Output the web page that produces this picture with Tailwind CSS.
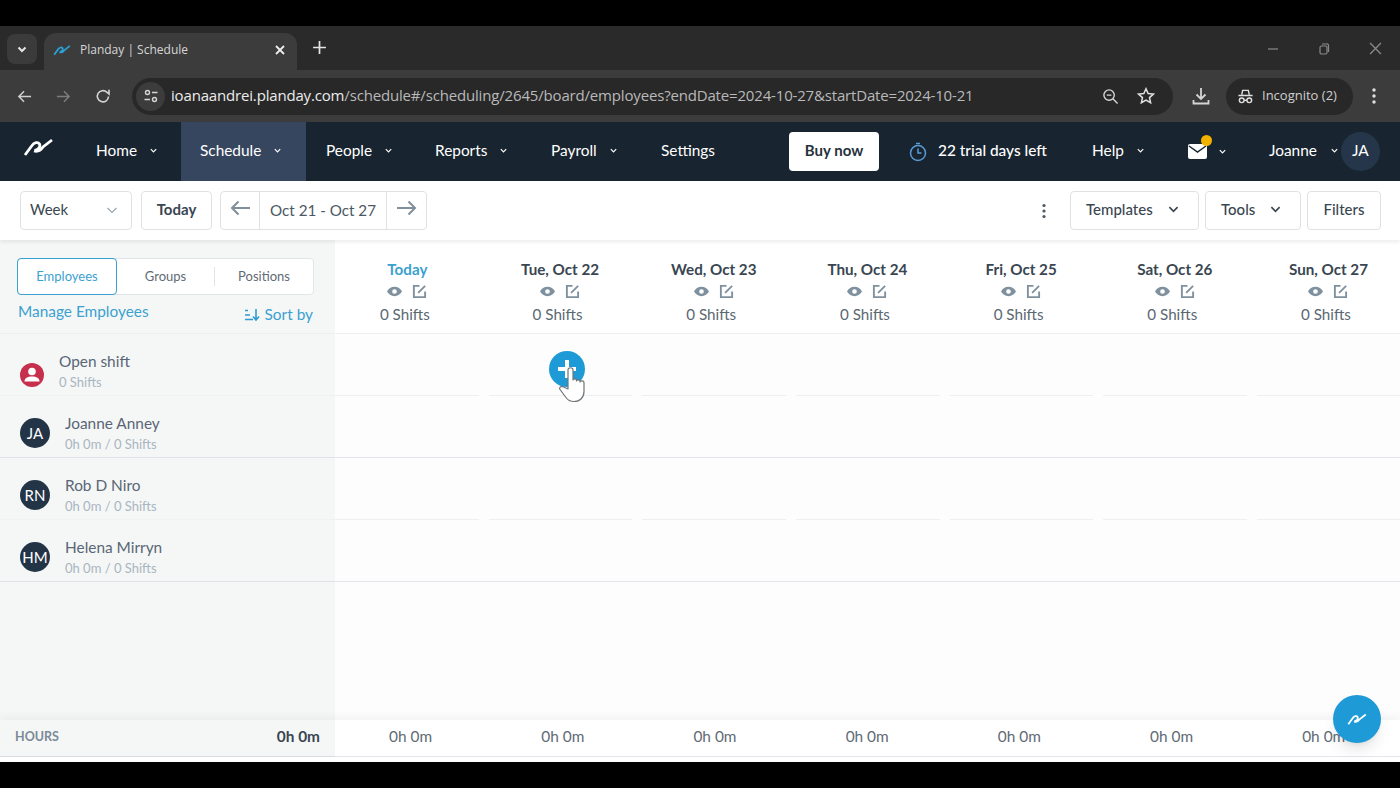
<!DOCTYPE html>
<html>
<head>
<meta name="viewport" content="width=device-width, initial-scale=1">
<title>Planday | Schedule</title>
<script src="https://cdn.jsdelivr.net/npm/@tailwindcss/browser@4"></script>
</head>
<body class="bg-black">
<div class="relative h-[788px] w-[1400px] overflow-hidden bg-black font-['Lato',sans-serif]">
  <div class="h-[26px]"></div>

  <!-- tab strip -->
  <div class="flex h-[44px] items-end bg-[#2a2a2a] font-['Open_Sans',sans-serif] text-[#d6d6d6]">
    <div class="mb-[6px] ml-[7px] flex h-[30px] w-[30px] items-center justify-center rounded-lg bg-[#3b3b3b]">
      <svg class="h-3 w-3" viewBox="0 0 12 12" fill="none" stroke="#e5e5e5" stroke-width="2"><path d="M2.5 4.5 6 8l3.5-3.5"/></svg>
    </div>
    <div class="ml-[7px] flex h-[37px] w-[253px] items-center rounded-t-xl bg-[#3c3c3c] pb-[4px] pl-[9px] pr-[11px]">
      <svg class="h-[16px] w-[18px]" viewBox="0 0 31 20" fill="none" stroke="#2aa0d6" stroke-width="3"><path d="M2 18 9 8.500c2-3 6-4 7.500-1.500 1.500 3-2 6-5 6.500M11 14c4 1 7-1 9-4L29 3"/></svg>
      <span class="ml-[9px] flex-1 text-[12px]">Planday | Schedule</span>
      <svg class="h-[12px] w-[12px]" viewBox="0 0 12 12" stroke="#eeeeee" stroke-width="1.800"><path d="m2 2 8 8M10 2l-8 8"/></svg>
    </div>
    <svg class="mb-[15px] ml-[15px] h-[15px] w-[15px]" viewBox="0 0 14 14" stroke="#e5e5e5" stroke-width="1.600"><path d="M7 1v12M1 7h12"/></svg>
    <div class="flex-1"></div>
    <div class="mb-[15px] flex items-center gap-[39px] pr-[18px]">
      <svg class="h-[12px] w-[12px]" viewBox="0 0 12 12" stroke="#8a8a8a" stroke-width="1.200"><path d="M1 6h10"/></svg>
      <svg class="h-[12px] w-[12px]" viewBox="0 0 12 12" fill="none" stroke="#8a8a8a" stroke-width="1.200"><rect x="2" y="3" width="7" height="8" rx="1.500"/><path d="M4 1h4.500A1.500 1.500 0 0 1 10.500 2.500V9"/></svg>
      <svg class="h-[13px] w-[13px]" viewBox="0 0 12 12" stroke="#8a8a8a" stroke-width="1.200"><path d="m1 1 10 10M11 1 1 11"/></svg>
    </div>
  </div>

  <!-- browser toolbar -->
  <div class="flex h-[52px] items-center bg-[#3c3c3c] font-['Open_Sans',sans-serif] text-[#d9d9d9]">
    <div class="flex w-[132px] items-center pl-[17px]">
      <svg class="h-[15px] w-[15px]" viewBox="0 0 16 16" fill="none" stroke="#cfcfcf" stroke-width="1.600"><path d="M15 8H2M7.500 2.500 2 8l5.500 5.500"/></svg>
      <svg class="ml-[24px] h-[15px] w-[15px]" viewBox="0 0 16 16" fill="none" stroke="#7d7d7d" stroke-width="1.600"><path d="M1 8h13M8.500 2.500 14 8l-5.500 5.500"/></svg>
      <svg class="ml-[24px] h-[16px] w-[16px]" viewBox="0 0 16 16" fill="none" stroke="#d5d5d5" stroke-width="1.600"><path d="M13.500 8.500a5.600 5.600 0 1 1-1.700-4.300L14 6V1.800"/></svg>
    </div>
    <div class="flex h-[37px] w-[1041px] items-center rounded-full bg-[#282828]">
      <div class="ml-[4px] flex h-[29px] w-[29px] items-center justify-center rounded-full bg-[#3c3c3c]">
        <svg class="h-[16px] w-[16px]" viewBox="0 0 16 16" fill="none" stroke="#d5d5d5" stroke-width="1.400"><circle cx="4.500" cy="4.500" r="2"/><path d="M9 4.500h5.500M1.500 11.500H7"/><circle cx="11.500" cy="11.500" r="2"/></svg>
      </div>
      <span class="ml-[6px] flex-1 pb-[2px] text-[15px] tracking-[-0.17px] whitespace-nowrap"><span class="text-[#ececec]">ioanaandrei.planday.com</span><span class="text-[#b9b9b9]">/schedule#/scheduling/2645/board/employees?endDate=2024-10-27&amp;startDate=2024-10-21</span></span>
      <svg class="h-[17px] w-[17px]" viewBox="0 0 18 18" fill="none" stroke="#d5d5d5" stroke-width="1.500"><circle cx="7.500" cy="7.500" r="5.500"/><path d="m11.500 11.500 5 5M5 7.500h5"/></svg>
      <svg class="ml-[18px] mr-[18px] h-[18px] w-[18px]" viewBox="0 0 20 20" fill="none" stroke="#e0e0e0" stroke-width="1.700"><path d="m10 2 2.400 5.300 5.800.6-4.300 3.900 1.200 5.700-5.100-2.900-5.100 2.900 1.200-5.700L1.800 7.900l5.800-.6z"/></svg>
    </div>
    <svg class="ml-[18px] h-[20px] w-[20px]" viewBox="0 0 20 20" fill="none" stroke="#d5d5d5" stroke-width="1.800"><path d="M10 2v11M5.500 8.500 10 13l4.500-4.500M2.500 14v3.500h15V14"/></svg>
    <div class="ml-[15px] flex h-[37px] w-[127px] items-center rounded-full bg-[#282828] pl-[11px]">
      <svg class="h-[17px] w-[17px]" viewBox="0 0 18 18" fill="none" stroke="#e0e0e0" stroke-width="1.500"><path d="M5 7 6 2.500h6L13 7M1.500 8h15"/><circle cx="5" cy="13" r="2.500"/><circle cx="13" cy="13" r="2.500"/><path d="M7.500 13h3"/></svg>
      <span class="ml-[8px] text-[13px] text-[#cfcfcf]">Incognito (2)</span>
    </div>
    <svg class="ml-[18px] h-[18px] w-[6px]" viewBox="0 0 6 18" fill="#e0e0e0"><circle cx="3" cy="3" r="1.700"/><circle cx="3" cy="9" r="1.700"/><circle cx="3" cy="15" r="1.700"/></svg>
  </div>

  <!-- planday nav -->
  <nav class="flex h-[59px] items-center bg-[#18242f] text-[15.4px] text-white">
    <div class="flex w-[96px] justify-start pl-[23px]">
      <svg class="mb-[9px] h-[20px] w-[31px]" viewBox="0 0 31 20" fill="none" stroke="#ffffff" stroke-width="2.800"><path d="M2 18 9 8.500c2-3 6-4 7.500-1.500 1.500 3-2 6-5 6.500M11 14c4 1 7-1 9-4L29 3"/></svg>
    </div>
    <div class="flex w-[85px] items-center gap-[12px] pb-[2px]">Home <svg class="h-[9px] w-[9px]" viewBox="0 0 10 10" fill="none" stroke="#fff" stroke-width="1.300"><path d="m2 3.500 3 3 3-3"/></svg></div>
    <div class="flex h-full w-[125px] items-center gap-[12px] bg-[#36465f] pb-[2px] pl-[19px]">Schedule <svg class="h-[9px] w-[9px]" viewBox="0 0 10 10" fill="none" stroke="#fff" stroke-width="1.300"><path d="m2 3.500 3 3 3-3"/></svg></div>
    <div class="ml-[20px] flex w-[109px] items-center gap-[12px] pb-[2px]">People <svg class="h-[9px] w-[9px]" viewBox="0 0 10 10" fill="none" stroke="#fff" stroke-width="1.300"><path d="m2 3.500 3 3 3-3"/></svg></div>
    <div class="flex w-[116px] items-center gap-[12px] pb-[2px]">Reports <svg class="h-[9px] w-[9px]" viewBox="0 0 10 10" fill="none" stroke="#fff" stroke-width="1.300"><path d="m2 3.500 3 3 3-3"/></svg></div>
    <div class="flex w-[110px] items-center gap-[12px] pb-[2px]">Payroll <svg class="h-[9px] w-[9px]" viewBox="0 0 10 10" fill="none" stroke="#fff" stroke-width="1.300"><path d="m2 3.500 3 3 3-3"/></svg></div>
    <div class="w-[128px] pb-[2px]">Settings</div>
    <div class="flex h-[39px] w-[90px] items-center justify-center rounded bg-white pb-[2px] text-[15px] font-bold text-[#28323c]">Buy now</div>
    <svg class="ml-[30px] h-[20px] w-[18px]" viewBox="0 0 18 20" fill="none" stroke="#5b9bd5" stroke-width="1.500"><circle cx="9" cy="11" r="7.500"/><path d="M9 6.500V11h3.500M7 1.500h4"/></svg>
    <span class="ml-[11px] w-[154px] pb-[2px] font-medium">22 trial days left</span>
    <div class="flex w-[96px] items-center gap-[12px] pb-[2px]">Help <svg class="h-[9px] w-[9px]" viewBox="0 0 10 10" fill="none" stroke="#fff" stroke-width="1.300"><path d="m2 3.500 3 3 3-3"/></svg></div>
    <div class="relative flex w-[81px] items-center gap-[11px]">
      <svg class="h-[15px] w-[19px]" viewBox="0 0 19 15"><rect width="19" height="15" rx="2" fill="#fff"/><path d="m1 2 8.500 6L18 2" fill="none" stroke="#18242f" stroke-width="1.500"/></svg>
      <svg class="h-[9px] w-[9px]" viewBox="0 0 10 10" fill="none" stroke="#fff" stroke-width="1.300"><path d="m2 3.500 3 3 3-3"/></svg>
      <span class="absolute left-[13px] top-[-9px] h-[11px] w-[11px] rounded-full bg-[#f2b300]"></span>
    </div>
    <div class="flex items-center gap-[13px] pb-[2px]">Joanne <svg class="h-[9px] w-[9px]" viewBox="0 0 10 10" fill="none" stroke="#fff" stroke-width="1.300"><path d="m2 3.500 3 3 3-3"/></svg></div>
    <div class="ml-[2px] flex h-[39px] w-[39px] items-center justify-center rounded-full bg-[#26364a] pb-[2px]">JA</div>
  </nav>

  <!-- schedule toolbar -->
  <div class="relative flex h-[59px] items-center bg-white pl-[20px] pr-[19px] text-[15px] text-[#3a4651] shadow-[0_2px_4px_rgba(0,0,0,0.08)]">
    <div class="flex h-[39px] w-[112px] items-center justify-between rounded border border-[#dfe2e5] pb-[2px] pl-[9px] pr-[13px]">Week <svg class="h-[12px] w-[12px]" viewBox="0 0 12 12" fill="none" stroke="#9aa5af" stroke-width="1.200"><path d="m1.500 4 4.500 4.500L10.500 4"/></svg></div>
    <div class="ml-[9px] flex h-[39px] w-[71px] items-center justify-center rounded border border-[#dfe2e5] pb-[2px] font-bold">Today</div>
    <div class="ml-[8px] flex h-[39px] w-[207px] items-center rounded border border-[#dfe2e5]">
      <div class="flex h-full w-[39px] items-center justify-center border-r border-[#dfe2e5] pb-[5px]"><svg class="h-[16px] w-[20px]" viewBox="0 0 20 16" fill="none" stroke="#7f8f9c" stroke-width="2"><path d="M20 8H2M8.500 1.500 2 8l6.500 6.500"/></svg></div>
      <div class="flex h-full w-[127px] items-center justify-center border-r border-[#dfe2e5] text-[15.200px] text-[#4b5862]">Oct 21 - Oct 27</div>
      <div class="flex flex-1 items-center justify-center pb-[5px]"><svg class="h-[16px] w-[20px]" viewBox="0 0 20 16" fill="none" stroke="#7f8f9c" stroke-width="2"><path d="M0 8h18M11.500 1.500 18 8l-6.500 6.500"/></svg></div>
    </div>
    <div class="flex-1"></div>
    <svg class="h-[16px] w-[6px]" viewBox="0 0 6 16" fill="#4b5862"><circle cx="3" cy="2.500" r="1.600"/><circle cx="3" cy="8" r="1.600"/><circle cx="3" cy="13.500" r="1.600"/></svg>
    <div class="ml-[23px] flex h-[39px] w-[129px] items-center gap-[15px] rounded border border-[#dfe2e5] pb-[2px] pl-[15px] font-medium">Templates <svg class="h-[11px] w-[11px]" viewBox="0 0 12 12" fill="none" stroke="#3a4651" stroke-width="1.800"><path d="m1.500 3.500 4.500 4.500 4.500-4.500"/></svg></div>
    <div class="ml-[6px] flex h-[39px] w-[96px] items-center gap-[15px] rounded border border-[#dfe2e5] pb-[2px] pl-[15px] font-medium">Tools <svg class="h-[11px] w-[11px]" viewBox="0 0 12 12" fill="none" stroke="#3a4651" stroke-width="1.800"><path d="m1.500 3.500 4.500 4.500 4.500-4.500"/></svg></div>
    <div class="ml-[6px] flex h-[39px] w-[74px] items-center justify-center rounded border border-[#dfe2e5] pb-[2px] font-medium">Filters</div>
  </div>

  <!-- board -->
  <div class="flex h-[480px] bg-[#fdfdfd]">
    <aside class="w-[335px] bg-[#f5f7f7]">
      <div class="h-[94px] border-b border-[#eceeef] pl-[17px] pr-[22px] pt-[18px]">
        <div class="flex h-[37px] w-[297px] items-center rounded border border-[#e2e5e8] bg-white text-[13px] text-[#5f6b75]">
          <div class="-ml-px flex h-[37px] w-[100px] items-center justify-center rounded border border-[#3ba1cf] text-[#3ba1cf]">Employees</div>
          <div class="flex w-[98px] justify-center border-r border-[#e2e5e8]">Groups</div>
          <div class="flex flex-1 justify-center">Positions</div>
        </div>
        <div class="flex items-start justify-between text-[15.400px] text-[#3ba1cf]">
          <span class="pl-px pt-[5px]">Manage Employees</span>
          <span class="flex items-center gap-[5px] pt-[8px]">
            <svg class="h-[16px] w-[16px]" viewBox="0 0 16 16" fill="none" stroke="#2d9ccf" stroke-width="1.600"><path d="M1 3.500h3M1 8h5M1 12.500h8M12 2v11M9 9.500l3 3.500 3-3.500"/></svg>
            Sort by</span>
        </div>
      </div>
      <div class="relative flex h-[62px] items-start border-b border-[#eff1f2] pl-[20px]">
        <svg class="mt-[29px] h-[24px] w-[24px]" viewBox="0 0 24 24"><circle cx="12" cy="12" r="12" fill="#c7304c"/><circle cx="12" cy="8.500" r="3.800" fill="#fff"/><path d="M4.500 18.500c0-3.500 3-5 7.500-5s7.500 1.500 7.500 5z" fill="#fff"/></svg>
        <div class="ml-[15px] pt-[17px]">
          <div class="text-[15.400px] leading-[20px] text-[#5a6675]">Open shift</div>
          <div class="mt-[1px] text-[13px] leading-[20px] text-[#a9b5bf]">0 Shifts</div>
        </div>
      </div>
      <div class="flex h-[62px] items-start border-b border-[#dfe3e8] pl-[20px]">
        <div class="mt-[22px] flex h-[30px] w-[30px] items-center justify-center rounded-full bg-[#243447] text-[15px] text-white">JA</div>
        <div class="ml-[15px] pt-[17px]">
          <div class="text-[15.400px] leading-[20px] text-[#5a6675]">Joanne Anney</div>
          <div class="mt-[1px] text-[13px] leading-[20px] text-[#a9b5bf]">0h 0m / 0 Shifts</div>
        </div>
      </div>
      <div class="flex h-[62px] items-start border-b border-[#eff1f2] pl-[20px]">
        <div class="mt-[22px] flex h-[30px] w-[30px] items-center justify-center rounded-full bg-[#243447] text-[15px] text-white">RN</div>
        <div class="ml-[15px] pt-[17px]">
          <div class="text-[15.400px] leading-[20px] text-[#5a6675]">Rob D Niro</div>
          <div class="mt-[1px] text-[13px] leading-[20px] text-[#a9b5bf]">0h 0m / 0 Shifts</div>
        </div>
      </div>
      <div class="flex h-[62px] items-start border-b border-[#dfe3e8] pl-[20px]">
        <div class="mt-[22px] flex h-[30px] w-[30px] items-center justify-center rounded-full bg-[#243447] text-[15px] text-white">HM</div>
        <div class="ml-[15px] pt-[17px]">
          <div class="text-[15.400px] leading-[20px] text-[#5a6675]">Helena Mirryn</div>
          <div class="mt-[1px] text-[13px] leading-[20px] text-[#a9b5bf]">0h 0m / 0 Shifts</div>
        </div>
      </div>
    </aside>

    <div class="min-w-0 flex-1 overflow-hidden">
      <!-- day headers -->
      <div class="grid h-[94px] grid-cols-[repeat(7,153.7px)] border-b border-[#f0f1ec] bg-white pt-[20px] text-center text-[15.200px]">
        <div class="pr-[9px]"><div class="font-bold leading-[18px] text-[#3ba1cf]">Today</div><div class="mt-[6px] flex h-[15px] justify-center gap-[10px]"><svg class="h-[15px] w-[15px]" viewBox="0 0 16 16" fill="#7f919f"><path d="M8 3C4.500 3 1.500 5.200 0 8c1.500 2.800 4.500 5 8 5s6.500-2.200 8-5c-1.500-2.800-4.500-5-8-5zm0 7.500a2.500 2.500 0 1 1 0-5 2.500 2.500 0 0 1 0 5z"/></svg><svg class="h-[15px] w-[15px]" viewBox="0 0 16 16" fill="none" stroke="#7f919f" stroke-width="2"><path d="M8 2H2v12h12V8M6.500 9.500 14 2"/></svg></div><div class="mt-[5px] pr-[5px] leading-[20px] text-[#5a6872]">0 Shifts</div></div>
        <div class="pr-[11px]"><div class="font-bold leading-[18px] text-[#3a4651]">Tue, Oct 22</div><div class="mt-[6px] flex h-[15px] justify-center gap-[10px]"><svg class="h-[15px] w-[15px]" viewBox="0 0 16 16" fill="#7f919f"><path d="M8 3C4.500 3 1.500 5.200 0 8c1.500 2.800 4.500 5 8 5s6.500-2.200 8-5c-1.500-2.800-4.500-5-8-5zm0 7.500a2.500 2.500 0 1 1 0-5 2.500 2.500 0 0 1 0 5z"/></svg><svg class="h-[15px] w-[15px]" viewBox="0 0 16 16" fill="none" stroke="#7f919f" stroke-width="2"><path d="M8 2H2v12h12V8M6.500 9.500 14 2"/></svg></div><div class="mt-[5px] pr-[5px] leading-[20px] text-[#5a6872]">0 Shifts</div></div>
        <div class="pr-[11px]"><div class="font-bold leading-[18px] text-[#3a4651]">Wed, Oct 23</div><div class="mt-[6px] flex h-[15px] justify-center gap-[10px]"><svg class="h-[15px] w-[15px]" viewBox="0 0 16 16" fill="#7f919f"><path d="M8 3C4.500 3 1.500 5.200 0 8c1.500 2.800 4.500 5 8 5s6.500-2.200 8-5c-1.500-2.800-4.500-5-8-5zm0 7.500a2.500 2.500 0 1 1 0-5 2.500 2.500 0 0 1 0 5z"/></svg><svg class="h-[15px] w-[15px]" viewBox="0 0 16 16" fill="none" stroke="#7f919f" stroke-width="2"><path d="M8 2H2v12h12V8M6.500 9.500 14 2"/></svg></div><div class="mt-[5px] pr-[5px] leading-[20px] text-[#5a6872]">0 Shifts</div></div>
        <div class="pr-[11px]"><div class="font-bold leading-[18px] text-[#3a4651]">Thu, Oct 24</div><div class="mt-[6px] flex h-[15px] justify-center gap-[10px]"><svg class="h-[15px] w-[15px]" viewBox="0 0 16 16" fill="#7f919f"><path d="M8 3C4.500 3 1.500 5.200 0 8c1.500 2.800 4.500 5 8 5s6.500-2.200 8-5c-1.500-2.800-4.500-5-8-5zm0 7.500a2.500 2.500 0 1 1 0-5 2.500 2.500 0 0 1 0 5z"/></svg><svg class="h-[15px] w-[15px]" viewBox="0 0 16 16" fill="none" stroke="#7f919f" stroke-width="2"><path d="M8 2H2v12h12V8M6.500 9.500 14 2"/></svg></div><div class="mt-[5px] pr-[5px] leading-[20px] text-[#5a6872]">0 Shifts</div></div>
        <div class="pr-[11px]"><div class="font-bold leading-[18px] text-[#3a4651]">Fri, Oct 25</div><div class="mt-[6px] flex h-[15px] justify-center gap-[10px]"><svg class="h-[15px] w-[15px]" viewBox="0 0 16 16" fill="#7f919f"><path d="M8 3C4.500 3 1.500 5.200 0 8c1.500 2.800 4.500 5 8 5s6.500-2.200 8-5c-1.500-2.800-4.500-5-8-5zm0 7.500a2.500 2.500 0 1 1 0-5 2.500 2.500 0 0 1 0 5z"/></svg><svg class="h-[15px] w-[15px]" viewBox="0 0 16 16" fill="none" stroke="#7f919f" stroke-width="2"><path d="M8 2H2v12h12V8M6.500 9.500 14 2"/></svg></div><div class="mt-[5px] pr-[5px] leading-[20px] text-[#5a6872]">0 Shifts</div></div>
        <div class="pr-[11px]"><div class="font-bold leading-[18px] text-[#3a4651]">Sat, Oct 26</div><div class="mt-[6px] flex h-[15px] justify-center gap-[10px]"><svg class="h-[15px] w-[15px]" viewBox="0 0 16 16" fill="#7f919f"><path d="M8 3C4.500 3 1.500 5.200 0 8c1.500 2.800 4.500 5 8 5s6.500-2.200 8-5c-1.500-2.800-4.500-5-8-5zm0 7.500a2.500 2.500 0 1 1 0-5 2.500 2.500 0 0 1 0 5z"/></svg><svg class="h-[15px] w-[15px]" viewBox="0 0 16 16" fill="none" stroke="#7f919f" stroke-width="2"><path d="M8 2H2v12h12V8M6.500 9.500 14 2"/></svg></div><div class="mt-[5px] pr-[5px] leading-[20px] text-[#5a6872]">0 Shifts</div></div>
        <div class="pr-[11px]"><div class="font-bold leading-[18px] text-[#3a4651]">Sun, Oct 27</div><div class="mt-[6px] flex h-[15px] justify-center gap-[10px]"><svg class="h-[15px] w-[15px]" viewBox="0 0 16 16" fill="#7f919f"><path d="M8 3C4.500 3 1.500 5.200 0 8c1.500 2.800 4.500 5 8 5s6.500-2.200 8-5c-1.500-2.800-4.500-5-8-5zm0 7.500a2.500 2.500 0 1 1 0-5 2.500 2.500 0 0 1 0 5z"/></svg><svg class="h-[15px] w-[15px]" viewBox="0 0 16 16" fill="none" stroke="#7f919f" stroke-width="2"><path d="M8 2H2v12h12V8M6.500 9.500 14 2"/></svg></div><div class="mt-[5px] pr-[5px] leading-[20px] text-[#5a6872]">0 Shifts</div></div>
      </div>
      <!-- empty day cells, one row line per employee -->
      <div class="grid grid-cols-[repeat(7,143.7px)] gap-x-[10px]">
        <div class="h-[62px] border-b border-[#edf0f2]"></div><div class="h-[62px] border-b border-[#edf0f2]"></div><div class="h-[62px] border-b border-[#edf0f2]"></div><div class="h-[62px] border-b border-[#edf0f2]"></div><div class="h-[62px] border-b border-[#edf0f2]"></div><div class="h-[62px] border-b border-[#edf0f2]"></div><div class="h-[62px] border-b border-[#edf0f2]"></div>
        <div class="col-span-7 h-[62px] border-b border-[#e3e6ea]"></div>
        <div class="h-[62px] border-b border-[#edf0f2]"></div><div class="h-[62px] border-b border-[#edf0f2]"></div><div class="h-[62px] border-b border-[#edf0f2]"></div><div class="h-[62px] border-b border-[#edf0f2]"></div><div class="h-[62px] border-b border-[#edf0f2]"></div><div class="h-[62px] border-b border-[#edf0f2]"></div><div class="h-[62px] border-b border-[#edf0f2]"></div>
        <div class="col-span-7 h-[62px] border-b border-[#e3e6ea]"></div>
      </div>
    </div>
  </div>

  <!-- hours footer -->
  <div class="relative flex h-[42px] bg-white text-[15.400px] shadow-[0_-4px_8px_rgba(0,0,0,0.04)]">
    <div class="flex h-[37px] w-[335px] items-center justify-between border-b border-[#d9dce0] bg-[#f5f7f7] pb-[2px] pl-[15px] pr-[15px]">
      <span class="text-[12.500px] font-bold text-[#7b8a96]">HOURS</span>
      <span class="font-bold text-[#3a4651]">0h 0m</span>
    </div>
    <div class="grid h-[37px] flex-1 grid-cols-[repeat(7,152.2px)] items-center overflow-hidden border-b border-[#e3e6ea] pb-[2px] text-center text-[#5f6b75]">
      <span class="-ml-px">0h 0m</span><span class="-ml-px">0h 0m</span><span class="-ml-px">0h 0m</span><span class="-ml-px">0h 0m</span><span class="-ml-px">0h 0m</span><span class="-ml-px">0h 0m</span><span class="-ml-px">0h 0m</span>
    </div>
  </div>

  <!-- add-shift button under the pointer -->
  <div class="absolute left-[549px] top-[351px] flex h-[36px] w-[36px] items-center justify-center rounded-full bg-[#1e9ad6]">
    <svg class="h-[18px] w-[18px]" viewBox="0 0 18 18" stroke="#fff" stroke-width="4"><path d="M9 0v18M0 9h18"/></svg>
  </div>
  <svg class="absolute left-[558px] top-[367px] h-[36px] w-[28px]" viewBox="0 0 28 36" fill="#fff" stroke="#6f7478" stroke-width="1.200" stroke-linejoin="round"><path d="M10 3c0-3 5-3 5 0v10c0-1.500 3.500-1.500 3.500 0v1c0-1.500 3.500-1.500 3.500 0v1c0-1.500 4-1.500 4 .5v9c0 6-4 10-10 10-4 0-6-1-8-4l-6-8c-1.500-2 1.500-4 3.500-2.500L10 22z"/></svg>

  <!-- help bubble -->
  <div class="absolute left-[1333px] top-[695px] flex h-[48px] w-[48px] items-center justify-center rounded-full bg-[#1e9ad6] shadow-lg">
    <svg class="h-[14px] w-[20px]" viewBox="0 0 31 20" fill="none" stroke="#fff" stroke-width="2.800"><path d="M2 18 9 8.500c2-3 6-4 7.500-1.500 1.500 3-2 6-5 6.500M11 14c4 1 7-1 9-4L29 3"/></svg>
  </div>
</div>
</body>
</html>
